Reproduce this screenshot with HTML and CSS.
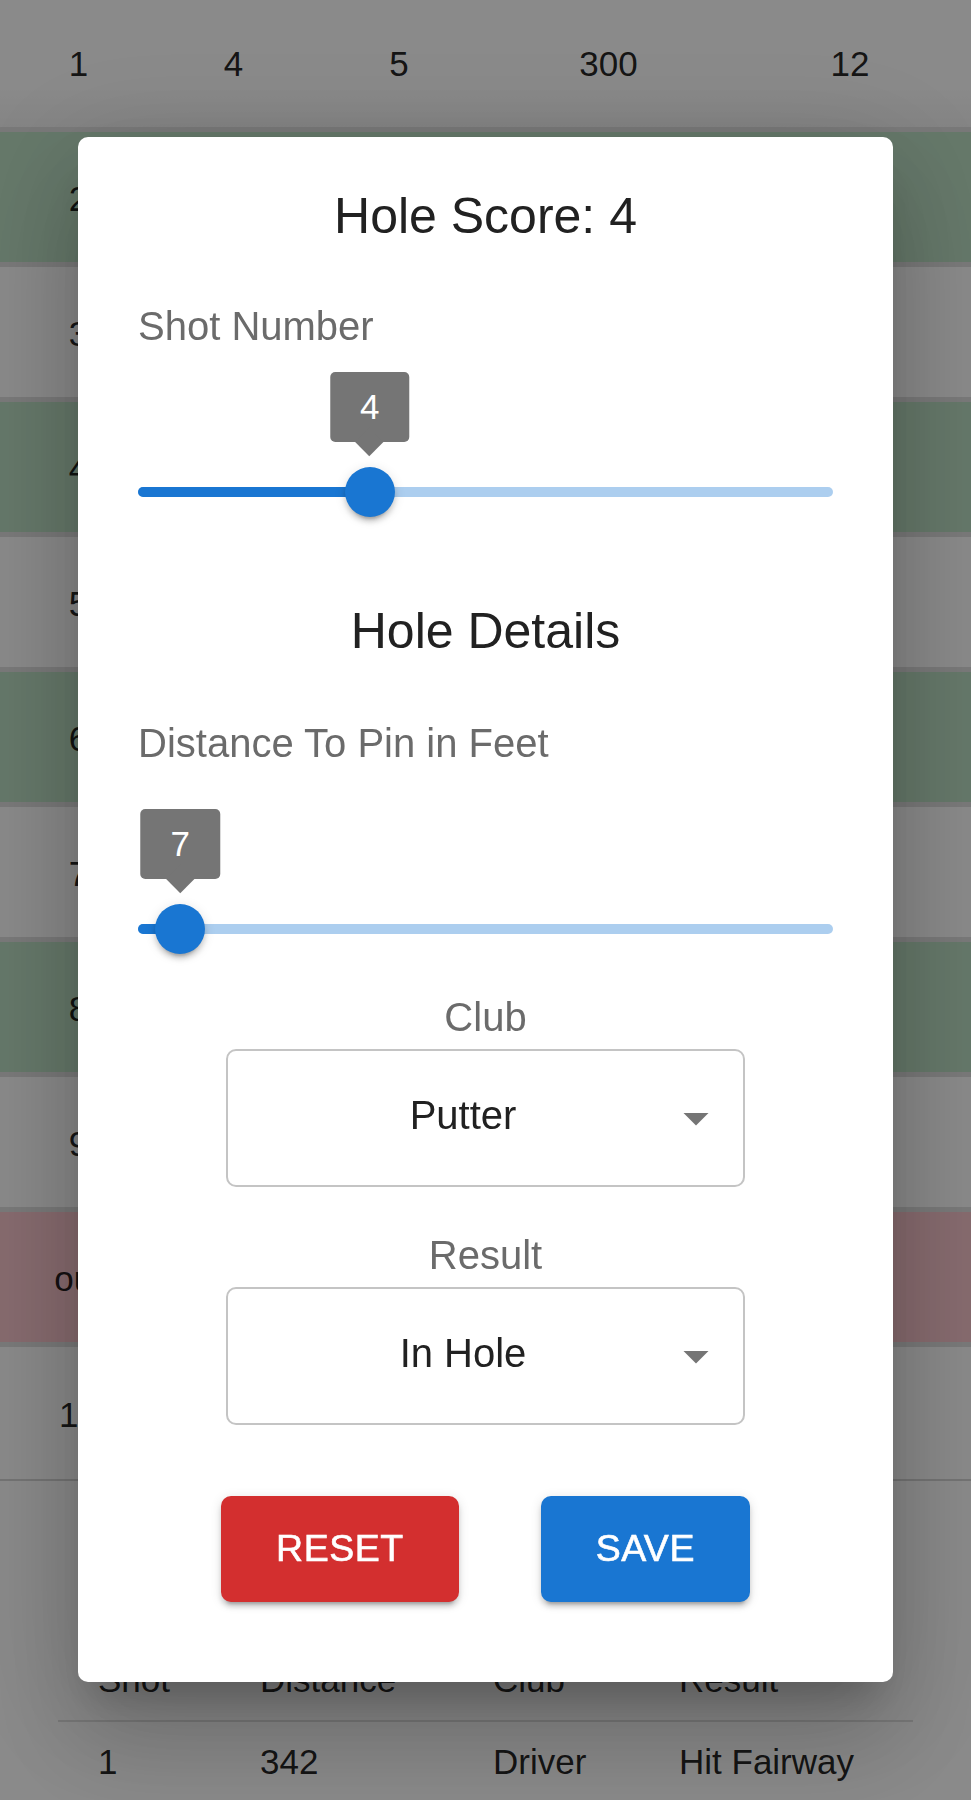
FILE: index.html
```html
<!DOCTYPE html>
<html lang="en">
<head>
<meta charset="utf-8">
<title>Hole Score</title>
<link rel="stylesheet" href="styles.css">
</head>
<body>
<main class="page">
  <section class="holes">
    <div class="row row-first"><span>1</span><span>4</span><span>5</span><span>300</span><span>12</span></div>
    <div class="row good"><span>2</span><span></span><span></span><span></span><span></span></div>
    <div class="row"><span>3</span><span></span><span></span><span></span><span></span></div>
    <div class="row good"><span>4</span><span></span><span></span><span></span><span></span></div>
    <div class="row"><span>5</span><span></span><span></span><span></span><span></span></div>
    <div class="row good"><span>6</span><span></span><span></span><span></span><span></span></div>
    <div class="row"><span>7</span><span></span><span></span><span></span><span></span></div>
    <div class="row good"><span>8</span><span></span><span></span><span></span><span></span></div>
    <div class="row"><span>9</span><span></span><span></span><span></span><span></span></div>
    <div class="row bad"><span>out</span><span></span><span></span><span></span><span></span></div>
    <div class="row row-last"><span>10</span><span></span><span></span><span></span><span></span></div>
  </section>

  <section class="shots">
    <div class="shot-row shot-head"><span>Shot</span><span>Distance</span><span>Club</span><span>Result</span></div>
    <div class="shot-row"><span>1</span><span>342</span><span>Driver</span><span>Hit Fairway</span></div>
  </section>
</main>

<div class="overlay">
  <div class="dialog" role="dialog">
    <h2 class="title">Hole Score: 4</h2>

    <p class="label">Shot Number</p>
    <div class="slider">
      <div class="rail"></div>
      <div class="track" style="width:33.333%"></div>
      <div class="thumb" style="left:33.333%">
        <div class="value">4</div>
      </div>
    </div>

    <h2 class="title title-details">Hole Details</h2>

    <p class="label label-distance">Distance To Pin in Feet</p>
    <div class="slider slider-distance">
      <div class="rail"></div>
      <div class="track" style="width:6.06%"></div>
      <div class="thumb" style="left:6.06%">
        <div class="value">7</div>
      </div>
    </div>

    <p class="label field-label field-club">Club</p>
    <div class="select">
      <span>Putter</span>
      <svg class="caret" viewBox="0 0 24 24" width="60" height="60"><path d="M7 10l5 5 5-5z"/></svg>
    </div>

    <p class="label field-label field-result">Result</p>
    <div class="select">
      <span>In Hole</span>
      <svg class="caret" viewBox="0 0 24 24" width="60" height="60"><path d="M7 10l5 5 5-5z"/></svg>
    </div>

    <div class="actions">
      <button class="btn btn-reset">Reset</button>
      <button class="btn btn-save">Save</button>
    </div>
  </div>
</div>
</body>
</html>
```
FILE: styles.css
```css
* { box-sizing: border-box; }

html, body {
  margin: 0;
  padding: 0;
  background: #ffffff;
  font-family: "Liberation Sans", Arial, Helvetica, sans-serif;
  color: rgba(0, 0, 0, 0.87);
}

.page {
  width: 971px;
}

/* ---------- background hole table ---------- */
.holes {
  display: flex;
  flex-direction: column;
}

.row {
  display: grid;
  grid-template-columns: 157px 153px 178px 241px 1fr;
  align-items: center;
  height: 135px;
  border-bottom: 5px solid #e0e0e0;
  font-size: 35px;
  line-height: 50px;
  text-align: center;
  background: #ffffff;
}

.row span { display: block; padding-top: 4px; }

.row-first {
  height: 132px;
  background: linear-gradient(#ffffff 70%, #f4f4f4);
}
.row-first span { padding-top: 0; }

.row.good { background: #bcdfc4; }
.row.bad { background: #fac6cd; }

.row-last {
  height: 134px;
  border-bottom: 2px solid #d6d6d6;
}

.shots {
  margin: 159px 58px 0;
}

.shot-row {
  display: grid;
  grid-template-columns: 162px 233px 186px 1fr;
  border-bottom: 2px solid #e0e0e0;
  font-size: 35px;
  line-height: 50px;
}

.shot-row span { padding: 15px 40px; white-space: nowrap; }

/* ---------- overlay + dialog ---------- */
.overlay {
  position: fixed;
  inset: 0;
  background: rgba(0, 0, 0, 0.46);
  display: flex;
  justify-content: center;
  align-items: flex-start;
}

.dialog {
  width: 815px;
  margin-top: 137px;
  padding: 39px 60px 80px;
  background: #ffffff;
  border-radius: 10px;
  box-shadow:
    0 27px 37px -17px rgba(0, 0, 0, 0.2),
    0 60px 95px 7px rgba(0, 0, 0, 0.14),
    0 22px 115px 20px rgba(0, 0, 0, 0.12);
  display: flex;
  flex-direction: column;
}

.title {
  margin: 0;
  font-size: 50px;
  line-height: 80px;
  font-weight: 400;
  text-align: center;
  color: #212121;
}

.title-details { margin-top: 94px; }

.label {
  margin: 40px 0 0;
  font-size: 40px;
  line-height: 60px;
  color: #6b6b6b;
}

.label-distance { margin-top: 42px; }

/* ---------- slider ---------- */
.slider {
  position: relative;
  height: 10px;
  margin-top: 131px;
}

.slider-distance { margin-top: 151px; }

.rail {
  position: absolute;
  inset: 0;
  border-radius: 5px;
  background: #1976d2;
  opacity: 0.36;
}

.track {
  position: absolute;
  left: 0;
  top: 0;
  bottom: 0;
  border-radius: 5px 0 0 5px;
  background: #1976d2;
}

.thumb {
  position: absolute;
  top: 50%;
  width: 50px;
  height: 50px;
  margin: -25px 0 0 -25px;
  border-radius: 50%;
  background: #1976d2;
  box-shadow:
    0 7px 3px -5px rgba(0, 0, 0, 0.2),
    0 5px 5px 0 rgba(0, 0, 0, 0.14),
    0 2px 12px 0 rgba(0, 0, 0, 0.12);
}

.value {
  position: absolute;
  left: 50%;
  bottom: calc(100% + 25px);
  transform: translateX(-50%);
  padding: 10px 30px;
  border-radius: 5px;
  background: #757575;
  color: #ffffff;
  font-size: 35px;
  line-height: 50px;
  white-space: nowrap;
}

.value::before {
  content: "";
  position: absolute;
  left: 50%;
  bottom: 0;
  width: 20px;
  height: 20px;
  background: #757575;
  transform: translate(-50%, 50%) rotate(45deg);
}

/* ---------- selects ---------- */
.field-label {
  text-align: center;
}

.field-club { margin-top: 53px; }
.field-result { margin-top: 38px; }

.select {
  position: relative;
  width: 519px;
  height: 138px;
  margin: 2px auto 0;
  padding: 0 80px 5px 35px;
  border: 2px solid #c4c4c4;
  border-radius: 10px;
  display: flex;
  align-items: center;
  justify-content: center;
  font-size: 40px;
  color: #212121;
}

.caret {
  position: absolute;
  right: 17px;
  top: 50%;
  transform: translateY(-50%);
  fill: #757575;
}

/* ---------- buttons ---------- */
.actions {
  margin-top: 71px;
  display: flex;
  justify-content: center;
  gap: 82px;
}

.btn {
  border: none;
  border-radius: 10px;
  padding: 20px 55px;
  font-family: inherit;
  font-size: 37.5px;
  line-height: 65.6px;
  letter-spacing: 0.5px;
  text-transform: uppercase;
  color: #ffffff;
  -webkit-text-stroke: 0.6px #ffffff;
  box-shadow:
    0 7px 3px -5px rgba(0, 0, 0, 0.2),
    0 5px 5px 0 rgba(0, 0, 0, 0.14),
    0 2px 12px 0 rgba(0, 0, 0, 0.12);
}

.btn-reset { background: #d32f2f; }
.btn-save { background: #1976d2; }
```
